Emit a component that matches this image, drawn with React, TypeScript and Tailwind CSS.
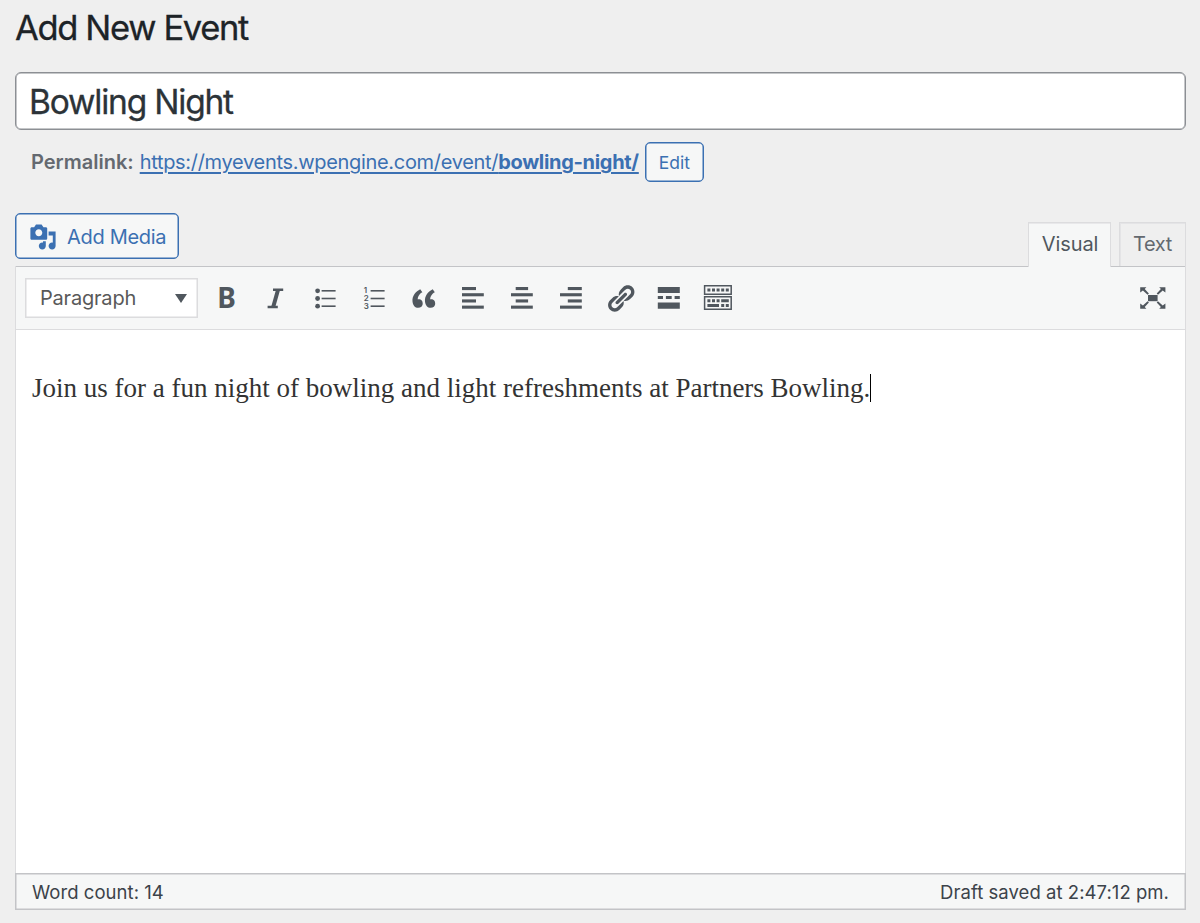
import type { ReactNode } from 'react'

function ToolIcon({ children, size = 32, box = 32 }: { children: ReactNode; size?: number; box?: number }) {
  return (
    <svg width={size} height={size} viewBox={`0 0 ${box} ${box}`} fill="currentColor" className="shrink-0 overflow-visible">
      {children}
    </svg>
  )
}

const alignRows = [5, 11.2, 17.4, 23.6]

function AlignIcon({ x, width }: { x: number; width: number }) {
  return (
    <ToolIcon>
      {alignRows.map((y, i) => (
        <rect key={y} x={i % 2 ? 5 : x} y={y} width={i % 2 ? 21.8 : width} height={3.1} />
      ))}
    </ToolIcon>
  )
}

const tools = [
  {
    label: 'Bold',
    icon: (
      <ToolIcon>
        <text x="6.2" y="26.4" className="font-['Noto_Sans',sans-serif] text-[28px] font-bold">
          B
        </text>
      </ToolIcon>
    ),
  },
  {
    label: 'Italic',
    icon: (
      <ToolIcon>
        <path d="M13 7.7h10.2M7.6 25h10.2" fill="none" stroke="currentColor" strokeWidth="2.6" />
        <path d="M18 8l-4.8 17" fill="none" stroke="currentColor" strokeWidth="4" />
      </ToolIcon>
    ),
  },
  {
    label: 'Bulleted list',
    icon: (
      <ToolIcon>
        {[8.8, 16.5, 24.2].map((y) => (
          <g key={y}>
            <circle cx="8.6" cy={y} r="2.4" />
            <rect x="12.6" y={y - 0.8} width="14" height="1.6" />
          </g>
        ))}
      </ToolIcon>
    ),
  },
  {
    label: 'Numbered list',
    icon: (
      <ToolIcon>
        {[8.8, 16.5, 24.2].map((y, i) => (
          <g key={y}>
            <text x="5.8" y={y + 2.6} className="font-['Inter',sans-serif] text-[8px] font-semibold">
              {i + 1}
            </text>
            <rect x="12.6" y={y - 0.8} width="14" height="1.6" />
          </g>
        ))}
      </ToolIcon>
    ),
  },
  {
    label: 'Blockquote',
    icon: (
      <ToolIcon size={31} box={20}>
        <path d="M9.49 13.22c0-.74-.2-1.38-.61-1.9-.62-.78-1.83-.88-2.53-.72-.29-1.65 1.11-3.75 2.92-4.65L7.88 4c-2.73 1.3-5.42 4.28-4.96 8.05C3.21 14.43 4.59 16 6.54 16c.85 0 1.56-.25 2.12-.75s.83-1.18.83-2.03zm8.05 0c0-.74-.2-1.38-.61-1.9-.63-.78-1.83-.88-2.53-.72-.29-1.65 1.11-3.75 2.92-4.65L15.93 4c-2.73 1.3-5.41 4.28-4.95 8.05.29 2.38 1.66 3.95 3.61 3.95.85 0 1.56-.25 2.12-.75s.83-1.18.83-2.03z" />
      </ToolIcon>
    ),
  },
  { label: 'Align left', icon: <AlignIcon x={5} width={14} /> },
  { label: 'Align center', icon: <AlignIcon x={9.7} width={12.4} /> },
  { label: 'Align right', icon: <AlignIcon x={12.8} width={14} /> },
  {
    label: 'Insert link',
    icon: (
      <ToolIcon size={31} box={20}>
        <path d="M17.74 2.76c1.68 1.69 1.68 4.41 0 6.1l-1.53 1.52c-1.12 1.12-2.7 1.47-4.14 1.09l2.62-2.61.76-.77.76-.76c.84-.84.84-2.2 0-3.04-.84-.85-2.2-.85-3.04 0l-.77.76-3.38 3.38c-.37-1.44-.02-3.02 1.1-4.14l1.52-1.53c1.69-1.68 4.42-1.68 6.1 0zM8.59 13.43l5.34-5.34c.42-.42.42-1.1 0-1.52-.44-.43-1.13-.39-1.53 0l-5.33 5.34c-.42.42-.42 1.1 0 1.52.44.43 1.13.39 1.52 0zm-.76 2.29l4.14-4.15c.38 1.44.03 3.02-1.09 4.14l-1.52 1.53c-1.69 1.68-4.41 1.68-6.1 0-1.68-1.68-1.68-4.42 0-6.1l1.53-1.52c1.12-1.12 2.7-1.47 4.14-1.1l-4.14 4.15c-.85.84-.85 2.2 0 3.05.84.84 2.2.84 3.04 0z" />
      </ToolIcon>
    ),
  },
  {
    label: 'Read more',
    icon: (
      <ToolIcon>
        <path d="M4.8 4.9h22v6.2h-22zM4.8 14h5.2v3H4.8zM12.9 14h5.8v3h-5.8zM21.6 14h5.2v3h-5.2zM4.8 20.4h22v6.4h-22z" />
      </ToolIcon>
    ),
  },
  {
    label: 'Toolbar toggle',
    icon: (
      <ToolIcon>
        <path d="M2.6 3.8h26.6v8.4H2.6zM2.6 14.8h26.6v12.4H2.6z" fill="none" stroke="currentColor" strokeWidth="1.5" />
        <path d="M5.4 6.6h3v3h-3zM10 6.6h3v3h-3zM14.6 6.6h3v3h-3zM19.2 6.6h3v3h-3zM23.8 6.6h3v3h-3z" />
        <path d="M5.4 17.3h3v3h-3zM10 17.3h3v3h-3zM14.6 17.3h3v3h-3zM19.2 17.3h7.6v3h-7.6z" />
        <path d="M5.4 21.9H17v3H5.4zM19.2 21.9h3v3h-3zM23.8 21.9h3v3h-3z" />
      </ToolIcon>
    ),
  },
]

export default function App() {
  return (
    <main className="flex h-[923px] w-[1200px] flex-col bg-[#efefef] pl-[15px] pr-[14px] font-['Inter',sans-serif] text-[#3c434a]">
      <h1 className="h-[72px] pt-[7px] text-[34.5px] leading-[41px] tracking-[-1.35px] text-[#1d2327] [-webkit-text-stroke:0.3px_#1d2327]">
        Add New Event
      </h1>

      <div className="flex h-[58px] items-center rounded-[6px] border border-[#8c8f94] bg-white pl-[13px] pt-[2px] text-[33.5px] tracking-[-1.2px] text-[#2c3338] shadow-[inset_0_0_0_0.5px_#8c8f94] [-webkit-text-stroke:0.3px_#2c3338]">
        Bowling Night
      </div>

      <div className="mt-3 flex h-10 items-center pl-4 text-[20px]">
        <strong className="mr-[6px] font-semibold text-[#646970]">Permalink:</strong>
        <a className="tracking-[-0.31px] text-[#3b70b2] underline decoration-[1.5px] underline-offset-[3px]">
          https://myevents.wpengine.com/event/<b className="font-bold">bowling-night/</b>
        </a>
        <button className="ml-[6px] h-10 w-[59px] rounded-[5px] border border-[#3b70b2] bg-[#f6f7f7] pt-[2px] text-[17.5px] text-[#3b70b2] shadow-[inset_0_0_0_0.5px_#3b70b2]">
          Edit
        </button>
      </div>

      <div className="mt-[31px] flex h-[53px] items-start justify-between">
        <button className="flex h-[46px] w-[164px] items-center rounded-[5px] border border-[#3b70b2] bg-[#f6f7f7] pl-[13px] text-[20px] text-[#3b70b2] shadow-[inset_0_0_0_0.5px_#3b70b2]">
          <svg width="28" height="28" viewBox="0 0 20 20" fill="currentColor" className="mr-[10px] mt-[2px] shrink-0">
            <path d="M13 11V4c0-.55-.45-1-1-1h-1.67L9 1H5L3.67 3H2c-.55 0-1 .45-1 1v7c0 .55.45 1 1 1h10c.55 0 1-.45 1-1zM7 4.5c1.38 0 2.5 1.12 2.5 2.5S8.38 9.5 7 9.5 4.5 8.38 4.5 7 5.62 4.5 7 4.5zM14 6h5v10.5c0 1.38-1.12 2.5-2.5 2.5S14 17.88 14 16.5s1.12-2.5 2.5-2.5c.17 0 .34.02.5.05V9h-3V6zm-4 8.05V13h2v3.5c0 1.38-1.12 2.5-2.5 2.5S7 17.88 7 16.5 8.12 14 9.5 14c.17 0 .34.02.5.05z" />
          </svg>
          <span className="whitespace-nowrap pt-[2px] tracking-[-0.3px]">Add Media</span>
        </button>
        <div className="flex gap-2 pt-[9px] text-[20px]">
          <div className="relative z-10 h-[45px] w-[83px] border border-b-0 border-[#dcdcde] bg-[#f6f7f7] pl-px pt-[6px] text-center tracking-[-0.1px] text-[#50575e] shadow-[inset_0_1px_0_#e8e8ea]">
            Visual
          </div>
          <div className="h-[45px] w-[67px] border border-[#dcdcde] bg-[#efefef] pt-[6px] text-center tracking-[-0.3px] text-[#646970] shadow-[inset_1px_1px_0_#e4e4e6]">
            Text
          </div>
        </div>
      </div>

      <section className="flex h-[608px] flex-col border-x border-[#dcdcde] bg-white">
        <div className="flex h-[64px] shrink-0 items-center border-y border-b-[#dcdcde] border-t-[#c3c4c7] bg-[#f6f7f7] pl-[9px] pr-4 text-[#50575e]">
          <div className="mr-[4px] flex h-10 w-[173px] items-center justify-between border border-[#dcdcde] bg-white pl-[14px] pr-[10px] text-[20px] tracking-[-0.2px] text-[#595959] shadow-[inset_0_0_0_0.5px_#dcdcde]">
            Paragraph
            <svg width="12" height="9" viewBox="0 0 12 9" fill="#50575e">
              <path d="M0 0h12L6 9z" />
            </svg>
          </div>
          {tools.map((tool) => (
            <div key={tool.label} aria-label={tool.label} className="flex w-[49.2px] shrink-0 justify-center">
              {tool.icon}
            </div>
          ))}
          <div className="ml-auto">
            <ToolIcon>
              <path d="M11 13h9.6v6.2H11z" />
              <path d="M3.2 5.2h6.2L7.7 6.9l4.2 4.7-1.3 1.2-4.7-4.2-2.7 2zM28.4 5.2h-6.2l1.7 1.7-4.2 4.7 1.3 1.2 4.7-4.2 2.7 2zM3.2 26.8h6.2l-1.7-1.7 4.2-4.7-1.3-1.2-4.7 4.2-2.7-2zM28.4 26.8h-6.2l1.7-1.7-4.2-4.7 1.3-1.2 4.7 4.2 2.7-2z" />
            </ToolIcon>
          </div>
        </div>
        <div className="flex items-center pl-[16px] pt-[42px] font-['Liberation_Serif',serif] text-[27px] leading-[32px] text-[#333]">
          <p className="whitespace-nowrap">
            Join us for a fun night of bowling and light refreshments at Partners Bowling.
          </p>
          <span className="h-[28px] w-px bg-black" />
        </div>
      </section>

      <footer className="-mt-px flex h-[37px] shrink-0 items-center justify-between border border-[#c3c4c7] bg-[#f6f7f7] px-4 pt-[2px] text-[18.5px] tracking-[0.05px] shadow-[inset_0_0_0_0.5px_#c3c4c7]">
        <span>Word count: 14</span>
        <span>Draft saved at 2:47:12 pm.</span>
      </footer>
    </main>
  )
}
